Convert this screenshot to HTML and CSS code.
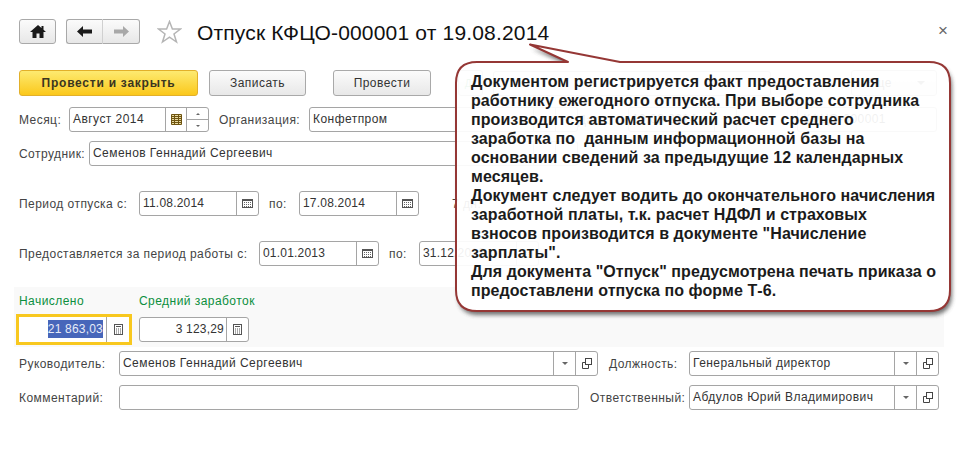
FILE: index.html
```html
<!DOCTYPE html>
<html lang="ru">
<head>
<meta charset="utf-8">
<title>Отпуск КФЦО-000001 от 19.08.2014</title>
<link rel="stylesheet" href="styles.css">
</head>
<body>
<svg class="defs" width="0" height="0" aria-hidden="true">
  <symbol id="cal" viewBox="0 0 11 9"><rect x=".5" y=".5" width="10" height="8" fill="#fff" stroke="#555"/><path d="M1 1.500h9" stroke="#555"/><path d="M2 3.500h1M4 3.500h1M6 3.500h1M8 3.500h1M2 5.500h1M4 5.500h1M6 5.500h1M8 5.500h1M2 7.500h1M4 7.500h1M6 7.500h1M8 7.500h1" stroke="#666"/></symbol>
  <symbol id="calc" viewBox="0 0 9 11"><rect x=".5" y=".5" width="8" height="10" fill="#fff" stroke="#555"/><path d="M2 2.500h5" stroke="#555"/><path d="M2 5h1M4 5h1M6 5h1M2 7h1M4 7h1M6 7h1M2 9h1M4 9h1M6 9h1" stroke="#555"/></symbol>
  <symbol id="open" viewBox="0 0 10 11"><rect x="3.500" y=".5" width="6" height="6" fill="#fff" stroke="#444"/><path d="M3 4.500H.5v6h6V7" fill="none" stroke="#444"/></symbol>
  <symbol id="drop" viewBox="0 0 6 3"><path d="M0 0h6L3 3z" fill="#666"/></symbol>
</svg>

<main class="form">
  <div class="toolbar">
    <button class="nav home" type="button"><svg width="16" height="13" viewBox="0 0 16 13"><path d="M8 0 0 7h2.500v6h4V8.500h3V13h4V7H16l-2.500-2.200V1h-2v2z" fill="#1a1a1a"/></svg></button>
    <div class="nav-pair">
      <button class="nav" type="button"><svg width="15" height="11" viewBox="0 0 15 11"><path d="M0 5.500 6 0v3.500h9v4H6V11z" fill="#1a1a1a"/></svg></button>
      <button class="nav" type="button"><svg width="15" height="11" viewBox="0 0 15 11"><path d="M15 5.500 9 0v3.500H0v4h9V11z" fill="#a8a8a8"/></svg></button>
    </div>
    <svg class="star" width="25" height="24" viewBox="0 0 25 24"><path d="M12.500 1.500 15.400 9H23.500l-6.500 5 2.500 8-7-4.800-7 4.800 2.500-8-6.500-5H9.600z" fill="#fff" stroke="#b5b5b5" stroke-width="1.500"/></svg>
    <h1 class="title">Отпуск КФЦО-000001 от 19.08.2014</h1>
    <span class="close">×</span>
  </div>

  <div class="row actions">
    <button class="btn primary" type="button">Провести и закрыть</button>
    <button class="btn save" type="button">Записать</button>
    <button class="btn post" type="button">Провести</button>
    <button class="btn dt" type="button">Дт</button>
    <div class="field w-print"><span class="val"></span></div>
    <button class="btn more" type="button"><span>Еще</span><svg width="8" height="4"><use href="#drop"/></svg></button>
  </div>

  <div class="row r-month">
    <label class="lab l-month">Месяц:</label>
    <div class="field w-month">
      <span class="val">Август 2014</span>
      <span class="fb b-month"><svg width="11" height="11" viewBox="0 0 11 11"><path d="M.5.500h10v10H.5zM.5 2.500h10M.5 4.500h10M.5 6.500h10M.5 8.500h10M3.500.500v10M7.500 .500v10" fill="#e8d9a0" stroke="#6e5410"/></svg></span>
      <span class="fb b-spin"><i class="up"></i><i class="down"></i></span>
    </div>
    <label class="lab l-org">Организация:</label>
    <div class="field w-org"><span class="val">Конфетпром</span><span class="fb"></span><span class="fb"></span></div>
    <label class="lab l-date">Дата:</label>
    <div class="field w-date"><span class="val">19.08.2014</span><span class="fb"></span></div>
    <label class="lab l-num">№:</label>
    <div class="field w-num"><span class="val num">КФЦО-000001</span></div>
  </div>

  <div class="row r-emp">
    <label class="lab l-emp">Сотрудник:</label>
    <div class="field w-emp"><span class="val">Семенов Геннадий Сергеевич</span><span class="fb"></span><span class="fb"></span></div>
  </div>

  <div class="row r-period">
    <label class="lab l-period">Период отпуска с:</label>
    <div class="field w-date2"><span class="val">11.08.2014</span><span class="fb"><svg width="11" height="9"><use href="#cal"/></svg></span></div>
    <label class="lab l-to">по:</label>
    <div class="field w-date2"><span class="val">17.08.2014</span><span class="fb"><svg width="11" height="9"><use href="#cal"/></svg></span></div>
    <span class="lab days">7 дн.</span>
  </div>

  <div class="row r-grant">
    <label class="lab l-grant">Предоставляется за период работы с:</label>
    <div class="field w-date2"><span class="val">01.01.2013</span><span class="fb"><svg width="11" height="9"><use href="#cal"/></svg></span></div>
    <label class="lab l-to">по:</label>
    <div class="field w-date2"><span class="val">31.12.2013</span><span class="fb"><svg width="11" height="9"><use href="#cal"/></svg></span></div>
  </div>

  <section class="panel">
    <div class="sum">
      <span class="sum-label">Начислено</span>
      <div class="focus">
        <span class="val right"><span class="sel">21 863,03</span></span>
        <span class="fb b-focus"><svg width="9" height="11"><use href="#calc"/></svg></span>
      </div>
    </div>
    <div class="sum avg">
      <span class="sum-label">Средний заработок</span>
      <div class="field w-avg">
        <span class="val right">3 123,29</span>
        <span class="fb b-calc"><svg width="9" height="11"><use href="#calc"/></svg></span>
      </div>
    </div>
  </section>

  <div class="row r-head">
    <label class="lab l-head">Руководитель:</label>
    <div class="field w-head"><span class="val">Семенов Геннадий Сергеевич</span><span class="fb b-sm"><svg width="6" height="3"><use href="#drop"/></svg></span><span class="fb b-sm"><svg width="10" height="11"><use href="#open"/></svg></span></div>
    <label class="lab l-pos">Должность:</label>
    <div class="field w-pos"><span class="val">Генеральный директор</span><span class="fb b-sm"><svg width="6" height="3"><use href="#drop"/></svg></span><span class="fb b-sm"><svg width="10" height="11"><use href="#open"/></svg></span></div>
  </div>

  <div class="row r-comment">
    <label class="lab l-head">Комментарий:</label>
    <div class="field w-comment"><span class="val"></span></div>
    <label class="lab l-resp">Ответственный:</label>
    <div class="field w-pos"><span class="val">Абдулов Юрий Владимирович</span><span class="fb b-sm"><svg width="6" height="3"><use href="#drop"/></svg></span><span class="fb b-sm"><svg width="10" height="11"><use href="#open"/></svg></span></div>
  </div>
</main>

<aside class="callout">
  <svg class="bubble" width="510" height="290" viewBox="0 0 510 290" aria-hidden="true">
    <defs>
      <mask id="outside" maskUnits="userSpaceOnUse" x="0" y="0" width="510" height="290">
        <rect width="510" height="290" fill="#fff"/>
        <path d="M79 1.500 169 19H478Q499 19 499 40V247Q499 268 478 268H26Q5 268 5 247V40Q5 19 26 19H117Z" fill="#000"/>
      </mask>
      <filter id="soft" x="-5%" y="-5%" width="110%" height="110%"><feGaussianBlur stdDeviation="2"/></filter>
    </defs>
    <g mask="url(#outside)"><path d="M79 1.500 169 19H478Q499 19 499 40V247Q499 268 478 268H26Q5 268 5 247V40Q5 19 26 19H117Z" fill="#444" opacity=".75" filter="url(#soft)" transform="translate(2 4)"/></g>
    <path d="M79 1.500 169 19H478Q499 19 499 40V247Q499 268 478 268H26Q5 268 5 247V40Q5 19 26 19H117Z" fill="#fff" fill-opacity=".93" stroke="#953735" stroke-width="2" stroke-linejoin="round"/>
  </svg>
  <p class="note">Документом регистрируется факт предоставления<br>работнику ежегодного отпуска. При выборе сотрудника<br>производится автоматический расчет среднего<br>заработка по&nbsp; данным информационной базы на<br>основании сведений за предыдущие 12 календарных<br>месяцев.<br>Документ следует водить до окончательного начисления<br>заработной платы, т.к. расчет НДФЛ и страховых<br>взносов производится в документе "Начисление<br>зарплаты".<br>Для документа "Отпуск" предусмотрена печать приказа о<br>предоставлени отпуска по форме Т-6.</p>
</aside>
</body>
</html>
```
FILE: styles.css
```css
* { box-sizing: border-box; }
html, body { margin: 0; padding: 0; background: #fff; }
body { width: 965px; height: 471px; overflow: hidden; position: relative; font: 12px "Liberation Sans", Arial, sans-serif; color: #333; }
.defs { position: absolute; }
button { font: inherit; margin: 0; padding: 0; }

.form { padding-top: 19px; }
.toolbar { display: flex; align-items: center; height: 25px; padding-left: 19px; }
.nav { height: 25px; border: 1px solid #a9a9a9; border-radius: 3px; background: linear-gradient(#fbfbfb, #e7e7e7); display: flex; align-items: center; justify-content: center; }
.home { width: 37px; }
.nav-pair { display: flex; margin-left: 10px; }
.nav-pair .nav { width: 37px; }
.nav-pair .nav:first-child { border-radius: 3px 0 0 3px; border-right-color: #d0d0d0; }
.nav-pair .nav:last-child { border-radius: 0 3px 3px 0; border-left: 0; }
.star { margin-left: 17px; }
.title { margin: 2px 0 0 15px; font-size: 21px; font-weight: 400; color: #111; line-height: 25px; letter-spacing: .18px; white-space: nowrap; }
.close { position: absolute; left: 938px; top: 22px; font-size: 17px; line-height: 18px; color: #666; }

.row { display: flex; align-items: center; height: 25px; padding-left: 19px; }
.actions { margin-top: 26px; height: 26px; }
.r-month { margin-top: 11px; }
.r-emp { margin-top: 9px; }
.r-period { margin-top: 25px; }
.r-grant { margin-top: 25px; }
.r-head { margin-top: 4px; }
.r-comment { margin-top: 9px; }

.btn { height: 26px; border: 1px solid #a9a9a9; border-radius: 3px; background: linear-gradient(#fbfbfb, #e8e8e8); color: #333; letter-spacing: .45px; }
.primary { width: 179px; background: linear-gradient(#fdea71, #fbc81b); border-color: #e2b02a; color: #3a3520; font-weight: 700; letter-spacing: .75px; }
.save { width: 97px; margin-left: 11px; }
.post { width: 98px; margin-left: 27px; }
.dt { width: 25px; margin-left: 27px; color: #2e9a4e; font-size: 10px; letter-spacing: 0; }
.w-print { width: 278px; margin-left: 10px; }
.more { width: 86px; margin-left: 80px; display: flex; align-items: center; justify-content: space-between; padding: 0 11px 0 14px; }

.lab { color: #444; letter-spacing: .45px; white-space: nowrap; flex: none; }
.l-month { width: 50px; }
.l-org { width: 90px; margin-left: 10px; }
.l-date { width: 50px; }
.l-num { width: 60px; }
.l-emp { width: 70px; }
.l-period { width: 120px; }
.l-grant { width: 240px; }
.l-to { width: 30px; margin-left: 10px; }
.days { margin-left: 33px; }
.l-head { width: 100px; }
.l-pos { width: 80px; margin-left: 11px; }
.l-resp { width: 99px; margin-left: 11px; }

.field { height: 25px; display: flex; flex: none; align-items: stretch; background: #fff; border: 1px solid #a5a5a5; border-radius: 3px; }
.val { flex: 1; padding-left: 3px; line-height: 23px; color: #333; letter-spacing: .45px; white-space: nowrap; overflow: hidden; }
.right { text-align: right; padding: 0 2px 0 0; letter-spacing: .2px; }
.num { text-align: right; padding-right: 50px; }
.fb { width: 22px; flex: none; border-left: 1px solid #a5a5a5; display: flex; align-items: center; justify-content: center; }
.w-month { width: 140px; }
.b-month { width: 21px; }
.b-spin { width: 22px; flex-direction: column; align-items: stretch; }
.b-spin i { flex: 1; position: relative; display: block; }
.up { border-bottom: 1px solid #a5a5a5; }
.up::after, .down::after { content: ""; position: absolute; left: 9px; top: 5px; border: 2px solid transparent; }
.up::after { border-bottom-color: #666; border-top: 0; }
.down::after { border-top-color: #666; border-bottom: 0; }
.w-org { width: 269px; }
.w-date { width: 109px; }
.w-num { width: 140px; }
.w-emp { width: 489px; }
.w-date2 { width: 120px; }
.w-date2 .val { letter-spacing: .2px; }
.w-head { width: 479px; }
.w-pos { width: 250px; }
.w-comment { width: 460px; }
.b-sm { width: 22px; }

.panel { margin: 21px 0 0 14px; width: 930px; height: 60px; background: #f9f9f9; padding: 7px 0 0 2px; display: flex; }
.sum { display: flex; flex-direction: column; position: relative; }
.sum-label { color: #0c8f3e; letter-spacing: .45px; line-height: 14px; padding-left: 3px; height: 20px; }
.avg .sum-label { padding-left: 0; }
.focus { width: 116px; height: 31px; display: flex; background: #fff; border: 3px solid #f8c81f; }
.focus .val { line-height: 25px; }
.focus .val.right { padding-right: 3px; }
.sel { background: #4766ba; color: #e8ecf8; padding: 2px 0; }
.b-focus { width: 23px; }
.avg { margin-left: 7px; }
.w-avg { width: 110px; margin-top: 3px; }
.b-calc { width: 22px; }

.callout { position: absolute; left: 451px; top: 43px; width: 510px; height: 290px; }
.bubble { position: absolute; left: 0; top: 0; }
.note { position: absolute; left: 20px; top: 29px; margin: 0; font-size: 16px; line-height: 19px; font-weight: 700; letter-spacing: .08px; color: #1b1b1b; white-space: nowrap; }
```
